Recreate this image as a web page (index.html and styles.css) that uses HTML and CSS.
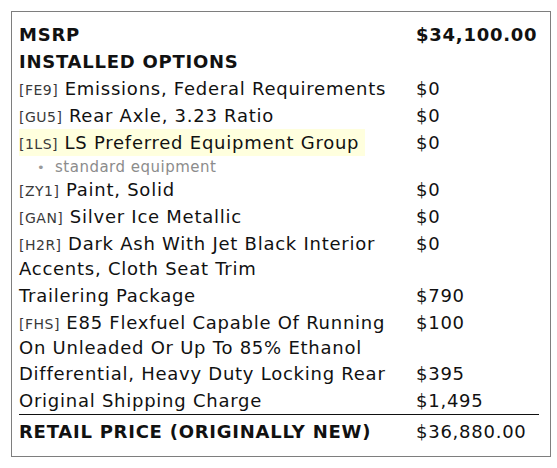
FILE: index.html
```html
<!DOCTYPE html>
<html>
<head>
<meta charset="utf-8">
<link rel="stylesheet" href="styles.css">
</head>
<body>
<div class="sticker">
  <table class="prices">
    <tr class="head"><td>MSRP</td><td class="amt">$34,100.00</td></tr>
    <tr class="head"><td colspan="2">INSTALLED OPTIONS</td></tr>
    <tr><td><span class="code">[FE9]</span> Emissions, Federal Requirements</td><td class="amt">$0</td></tr>
    <tr><td><span class="code">[GU5]</span> Rear Axle, 3.23 Ratio</td><td class="amt">$0</td></tr>
    <tr><td><span class="hl"><span class="code">[1LS]</span> LS Preferred Equipment Group</span></td><td class="amt">$0</td></tr>
    <tr class="sub"><td colspan="2"><ul class="notes"><li>standard equipment</li></ul></td></tr>
    <tr><td><span class="code">[ZY1]</span> Paint, Solid</td><td class="amt">$0</td></tr>
    <tr><td><span class="code">[GAN]</span> Silver Ice Metallic</td><td class="amt">$0</td></tr>
    <tr><td><span class="code">[H2R]</span> Dark Ash With Jet Black Interior Accents, Cloth Seat Trim</td><td class="amt">$0</td></tr>
    <tr><td>Trailering Package</td><td class="amt">$790</td></tr>
    <tr class="tight"><td><span class="code">[FHS]</span> E85 Flexfuel Capable Of Running On Unleaded Or Up To 85% Ethanol</td><td class="amt">$100</td></tr>
    <tr><td>Differential, Heavy Duty Locking Rear</td><td class="amt">$395</td></tr>
    <tr><td>Original Shipping Charge</td><td class="amt">$1,495</td></tr>
    <tr class="total"><td>RETAIL PRICE (ORIGINALLY NEW)</td><td class="amt">$36,880.00</td></tr>
  </table>
</div>
</body>
</html>
```

FILE: styles.css
```css
html, body {
  margin: 0;
  padding: 0;
  background: #ffffff;
}
body {
  font-family: "DejaVu Sans", sans-serif;
  color: #111111;
}
.sticker {
  margin: 11px 0 0 11px;
  width: 540px;
  border: 1px solid #7e7e7e;
  padding: 9px 11px 12px 7px;
  box-sizing: border-box;
}
.prices {
  width: 100%;
  border-collapse: collapse;
  border-spacing: 0;
  font-size: 18px;
  line-height: 25px;
  letter-spacing: 0.75px;
}
.prices td {
  padding: 1px 0;
  vertical-align: top;
}
.prices td:first-child {
  padding-right: 8px;
}
.prices td.amt {
  width: 123px;
  padding-right: 0;
  white-space: nowrap;
}
.prices .tight td {
  padding-bottom: 0;
}
.head td {
  font-weight: bold;
}
.code {
  font-size: 14px;
  line-height: 1;
  letter-spacing: 0.5px;
  color: #3a3a3a;
}
.hl {
  background: #ffffde;
  padding: 3px 6px 3px 0;
}
.prices .sub td {
  padding: 3px 0 0;
  line-height: 17px;
}
.notes {
  margin: 0;
  padding: 0 0 0 36px;
  font-size: 15px;
  letter-spacing: 0.5px;
  color: #8c8c8c;
  list-style: none;
}
.notes li::before {
  content: "\2022";
  color: #9a9a9a;
  display: inline-block;
  width: 18px;
  margin-left: -18px;
  font-size: 13px;
  line-height: 1;
}
.prices .total td {
  border-top: 1px solid #111111;
  padding-top: 4px;
  padding-bottom: 0;
}
.total td:first-child {
  font-weight: bold;
}
```
